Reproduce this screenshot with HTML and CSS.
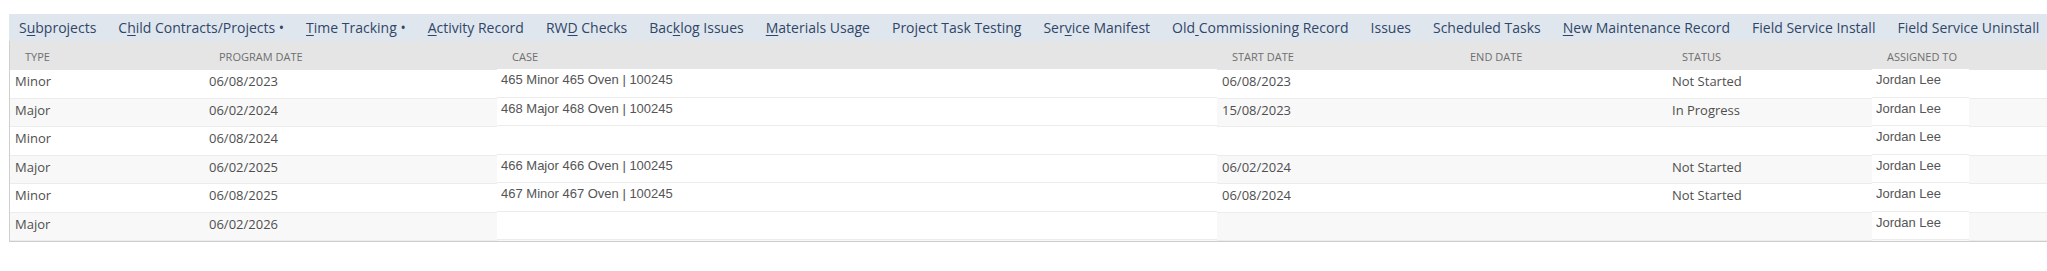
FILE: index.html
```html
<!DOCTYPE html>
<html lang="en">
<head>
<meta charset="utf-8">
<title>Subprojects</title>
<link rel="stylesheet" href="styles.css">
</head>
<body>
<div class="page">
  <nav class="tabs">
    <span class="tab">S<u>u</u>bprojects</span>
    <span class="tab">C<u>h</u>ild Contracts/Projects •</span>
    <span class="tab"><u>T</u>ime Tracking •</span>
    <span class="tab"><u>A</u>ctivity Record</span>
    <span class="tab">RW<u>D</u> Checks</span>
    <span class="tab">Bac<u>k</u>log Issues</span>
    <span class="tab"><u>M</u>aterials Usage</span>
    <span class="tab">Project Task Testing</span>
    <span class="tab">Ser<u>v</u>ice Manifest</span>
    <span class="tab">Old<u> </u>Commissioning Record</span>
    <span class="tab">Issues</span>
    <span class="tab">Scheduled Tasks</span>
    <span class="tab"><u>N</u>ew Maintenance Record</span>
    <span class="tab">Field Service Install</span>
    <span class="tab">Field Service Uninstall</span>
  </nav>
  <div class="list">
    <div class="row head">
      <div class="hc">Type</div>
      <div class="hc">Program Date</div>
      <div class="hc">Case</div>
      <div class="hc">Start Date</div>
      <div class="hc">End Date</div>
      <div class="hc">Status</div>
      <div class="hc">Assigned To</div>
      <div class="hc"></div>
    </div>
    <div class="row">
      <div class="c">Minor</div><div class="c">06/08/2023</div><div class="c box">465 Minor 465 Oven | 100245</div><div class="c">06/08/2023</div><div class="c"></div><div class="c">Not Started</div><div class="c box">Jordan Lee</div><div class="c"></div>
    </div>
    <div class="row alt">
      <div class="c">Major</div><div class="c">06/02/2024</div><div class="c box">468 Major 468 Oven | 100245</div><div class="c">15/08/2023</div><div class="c"></div><div class="c">In Progress</div><div class="c box">Jordan Lee</div><div class="c"></div>
    </div>
    <div class="row">
      <div class="c">Minor</div><div class="c">06/08/2024</div><div class="c box"></div><div class="c"></div><div class="c"></div><div class="c"></div><div class="c box">Jordan Lee</div><div class="c"></div>
    </div>
    <div class="row alt">
      <div class="c">Major</div><div class="c">06/02/2025</div><div class="c box">466 Major 466 Oven | 100245</div><div class="c">06/02/2024</div><div class="c"></div><div class="c">Not Started</div><div class="c box">Jordan Lee</div><div class="c"></div>
    </div>
    <div class="row">
      <div class="c">Minor</div><div class="c">06/08/2025</div><div class="c box">467 Minor 467 Oven | 100245</div><div class="c">06/08/2024</div><div class="c"></div><div class="c">Not Started</div><div class="c box">Jordan Lee</div><div class="c"></div>
    </div>
    <div class="row alt">
      <div class="c">Major</div><div class="c">06/02/2026</div><div class="c box"></div><div class="c"></div><div class="c"></div><div class="c"></div><div class="c box">Jordan Lee</div><div class="c"></div>
    </div>
  </div>
</div>
</body>
</html>
```

FILE: styles.css
```css
html, body {
  margin: 0;
  padding: 0;
  background: #ffffff;
}

.page {
  padding: 14px 0 0 9px;
  font-family: "Open Sans", "Liberation Sans", sans-serif;
}

.tabs {
  display: flex;
  align-items: center;
  height: 27px;
  background: #e0e6ee;
  font-size: 14px;
  color: #2f4668;
  white-space: nowrap;
  overflow: hidden;
}

.tab {
  padding: 0 11px;
  line-height: 19px;
}

.tab:first-child {
  padding-left: 10px;
}

.tab u {
  text-decoration-thickness: 1px;
  text-underline-offset: 2px;
}

.list {
  border-left: 1px solid #cfcfcf;
  border-bottom: 1px solid #cdcdcd;
  box-shadow: 0 1px 0 #e6e6e6;
}

.row {
  display: grid;
  grid-template-columns: 194px 293px 720px 238px 212px 205px 97px 1fr;
  height: 28.5px;
  background: #ffffff;
}

.row.alt {
  background: #f8f8f8;
}

.row.head {
  height: 29px;
  background: #e5e5e5;
}

.hc {
  align-self: center;
  padding-left: 15px;
  padding-top: 2px;
  font-size: 11px;
  text-transform: uppercase;
  color: #6f6f6f;
}

.c {
  padding: 2px 0 0 5px;
  font-size: 13px;
  line-height: 18px;
  color: #4f4f4f;
  border-bottom: 1px solid #ececec;
}

.c.box {
  margin: -1px 0 1px;
  padding: 3px 0 0 4px;
  background: #ffffff;
  font-family: "Liberation Sans", Arial, sans-serif;
  font-size: 13px;
  line-height: 15px;
  color: #555555;
}
```
